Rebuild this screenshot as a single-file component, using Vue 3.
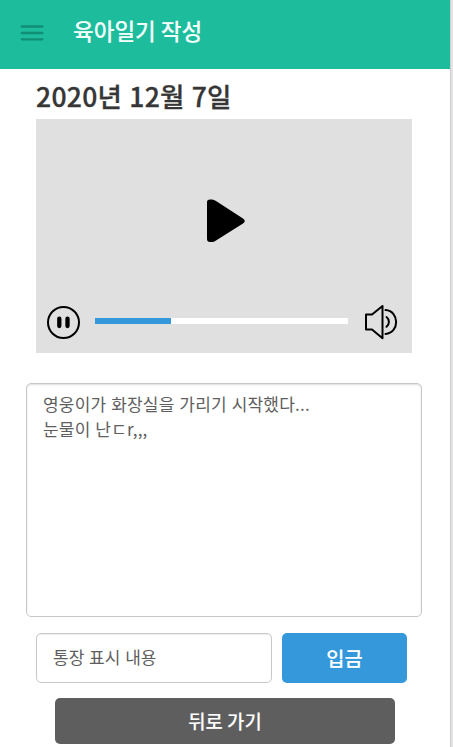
<script setup>
import { ref } from 'vue'

const diary = ref('영웅이가 화장실을 가리기 시작했다...\n눈물이 난ㄷr,,,')
const memo = ref('통장 표시 내용')
const progress = ref(30)
</script>

<template>
  <div class="screen">
    <header class="topbar">
      <button class="menu" aria-label="메뉴">
        <svg width="24" height="16" viewBox="0 0 24 16">
          <path d="M1.8 1.5H22.4M1.8 8H22.4M1.8 14.3H22.4" stroke="#128d76" stroke-width="2.3" stroke-linecap="round" />
        </svg>
      </button>
      <h1 class="title">육아일기 작성</h1>
    </header>
    <main class="content">
      <h2 class="date">2020년 12월 7일</h2>
      <section class="player">
        <div class="stage">
          <svg class="play" width="38" height="44" viewBox="0 0 38 44">
            <path d="M0 3Q0 .5 3 .5H5Q7 .5 9 2L36 19.5Q39.5 22 36 24.5L9 41.5Q7 43 5 43H3Q0 43 0 40Z" />
          </svg>
        </div>
        <div class="controls">
          <svg class="pause" width="34" height="34" viewBox="0 0 34 34">
            <circle cx="17.5" cy="17.5" r="15.5" fill="none" stroke="#000" stroke-width="2" />
            <path d="M13.3 13.6V21M21.5 13.6V21" stroke="#000" stroke-width="4.3" stroke-linecap="round" />
          </svg>
          <div class="track"><div class="played" :style="{ width: progress + '%' }"></div></div>
          <svg class="volume" width="34" height="36" viewBox="0 0 34 36" fill="none" stroke="#000" stroke-width="2" stroke-linecap="round" stroke-linejoin="round">
            <path d="M2 10.5H8L18.5 2V34.2L8 25.5H2Z" />
            <path d="M22.5 13A6.2 6.2 0 0 1 22.5 22.8M21.5 6C35.7 7 35.7 29 21.5 30" />
          </svg>
        </div>
      </section>
      <textarea class="diary" v-model="diary" spellcheck="false"></textarea>
      <div class="deposit">
        <input class="memo" v-model="memo" type="text">
        <button class="send">입금</button>
      </div>
      <button class="back">뒤로 가기</button>
    </main>
  </div>
</template>

<style>
body {
  margin: 0;
  background: #e3e3e3;
  overflow: hidden;
}
</style>

<style scoped>
.screen {
  box-sizing: border-box;
  width: 451px;
  height: 747px;
  background: #fff;
  border-right: 1px solid #cfcfcf;
  font-family: "Noto Sans CJK KR", sans-serif;
  overflow: hidden;
}
.screen button, .screen input, .screen textarea {
  box-sizing: border-box;
  margin: 0;
  font-family: inherit;
  outline: none;
}
.topbar {
  box-sizing: border-box;
  height: 69px;
  padding: 0 20px 10px;
  display: flex;
  align-items: center;
  background: #1dbc9c;
}
.menu {
  display: flex;
  padding: 7px 0 0;
  border: 0;
  background: none;
}
.title {
  margin: 0 0 0 29px;
  color: #f2fffc;
  font-size: 22.5px;
  line-height: 32px;
  font-weight: 500;
  -webkit-text-stroke: 0.1px;
}
.content {
  display: flex;
  flex-direction: column;
  padding: 0 28px 0 26px;
}
.date {
  height: 50px;
  margin: 0 0 0 10px;
  color: #363636;
  font-size: 26.5px;
  line-height: 54px;
  font-weight: 500;
  -webkit-text-stroke: 0.3px;
  letter-spacing: 0.3px;
  word-spacing: 0.7px;
  white-space: nowrap;
}
.player {
  display: flex;
  flex-direction: column;
  width: 376px;
  height: 234px;
  margin-left: 10px;
  background: #e0e0e0;
}
.stage {
  flex: 1;
  display: flex;
  justify-content: center;
  align-items: flex-end;
  padding-left: 3px;
}
.play {
  margin-bottom: 61px;
}
.controls {
  display: flex;
  align-items: center;
  height: 36px;
  padding: 0 14px 13px 10px;
}
.track {
  flex: 1;
  height: 6px;
  margin: 0 16px 2px 15px;
  background: #fff;
}
.played {
  height: 100%;
  background: #3498db;
}
.screen .diary {
  width: 396px;
  height: 234px;
  margin-top: 30px;
  padding: 7px 16px;
  border: 1px solid #c8c8c8;
  border-radius: 5px;
  box-shadow: inset 0 1px 2px #0002;
  background: #fff;
  color: #5e5e5e;
  font-size: 17px;
  letter-spacing: 0.2px;
  word-spacing: 0.8px;
  line-height: 25px;
  resize: none;
  overflow: hidden;
}
.deposit {
  display: flex;
  gap: 10px;
  margin: 16px 0 0 10px;
}
.memo {
  width: 236px;
  height: 50px;
  padding: 0 16px 3px;
  border: 1px solid #c8c8c8;
  border-radius: 5px;
  box-shadow: inset 0 1px 1px #0001;
  color: #5e5e5e;
  font-size: 17px;
  word-spacing: 1px;
}
.send {
  width: 125px;
  height: 50px;
  padding: 0 0 1px;
  border: 0;
  border-radius: 5px;
  background: #3498db;
  color: #fff;
  font-size: 19.8px;
  font-weight: 500;
  -webkit-text-stroke: 0.1px;
}
.screen .back {
  width: 340px;
  height: 46px;
  margin: 15px 0 0 29px;
  padding: 0 0 2px;
  border: 0;
  border-radius: 5px;
  background: #5e5e5e;
  color: #fff;
  font-size: 18.8px;
  font-weight: 500;
  -webkit-text-stroke: 0.1px;
}
</style>
